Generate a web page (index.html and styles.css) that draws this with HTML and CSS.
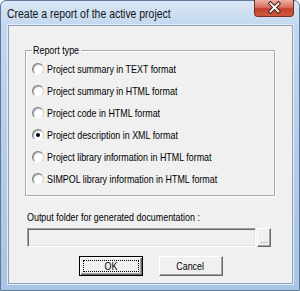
FILE: index.html
```html
<!DOCTYPE html>
<html lang="en">

<head>
  <meta charset="UTF-8">
  <title>Create a report of the active project</title>
  <link rel="stylesheet" href="styles.css">
</head>

<body>
  <div class="window">
    <!-- title bar -->
    <div class="titlebar">
      <span class="title">Create a report of the active project</span>
      <button class="close" aria-label="Close">
        <svg width="40" height="17" viewBox="0 0 40 17">
          <path d="M17 4.5 L25 12.5 M25 4.5 L17 12.5" stroke="#4a211a" stroke-width="4" stroke-linecap="square" />
          <path d="M17 4.5 L25 12.5 M25 4.5 L17 12.5" stroke="#ffffff" stroke-width="2" stroke-linecap="square" />
        </svg>
      </button>
    </div>

    <div class="client">
      <!-- report type group -->
      <fieldset class="group">
        <legend><span class="txt">Report type</span></legend>
        <label class="option"><span class="radio"></span><span class="txt">Project summary in TEXT format</span></label>
        <label class="option"><span class="radio"></span><span class="txt">Project summary in HTML format</span></label>
        <label class="option"><span class="radio"></span><span class="txt">Project code in HTML format</span></label>
        <label class="option"><span class="radio checked"></span><span class="txt">Project description in XML format</span></label>
        <label class="option"><span class="radio"></span><span class="txt">Project library information in HTML format</span></label>
        <label class="option"><span class="radio"></span><span class="txt">SIMPOL library information in HTML format</span></label>
      </fieldset>

      <!-- output folder -->
      <div class="output-label"><span class="txt">Output folder for generated documentation :</span></div>
      <div class="output-row">
        <div class="field"></div>
        <div class="browse">...</div>
      </div>

      <div class="buttons">
        <button class="btn default"><span><i class="txt">OK</i></span></button>
        <button class="btn"><span><i class="txt">Cancel</i></span></button>
      </div>
    </div>
  </div>
</body>

</html>
```

FILE: styles.css
```css
* {
  margin: 0;
  padding: 0;
  box-sizing: border-box;
}

body {
  width: 300px;
  height: 291px;
  overflow: hidden;
  font-family: "Liberation Sans", Arial, sans-serif;
  font-size: 11px;
  color: #000;
  background: #fff;
}

/* the dialog font is narrower than Arial */
.txt {
  display: inline-block;
  font-style: normal;
  white-space: nowrap;
  transform: scaleX(0.81);
  transform-origin: 0 50%;
}

/* window frame */
.window {
  width: 300px;
  height: 291px;
  display: flex;
  flex-direction: column;
  padding: 0 6px 6px 7px;
  border: 1px solid #5f7a99;
  border-radius: 6px 6px 0 0;
  background: linear-gradient(#d9e7f6, #c3d8ef 24px, #b2cbe8 60%, #a9c4e4);
}

.titlebar {
  height: 24px;
  display: flex;
  align-items: flex-start;
  justify-content: space-between;
}

.title {
  margin-top: 6px;
  margin-left: -1px;
  font-size: 12px;
  line-height: 14px;
  color: #141414;
  white-space: nowrap;
  transform: scaleX(0.87);
  transform-origin: 0 50%;
}

.close {
  width: 40px;
  height: 17px;
  margin-top: -1px;
  margin-right: -1px;
  border: 1px solid #7a2f24;
  border-top: none;
  border-radius: 0 0 4px 4px;
  background: linear-gradient(#eab1a6, #d8705f 45%, #c2402e 55%, #cf5a40);
  display: flex;
  overflow: hidden;
}

.close svg {
  margin-left: -1px;
  margin-top: -1px;
}

.client {
  flex: 1;
  display: flex;
  flex-direction: column;
  background-color: #f0f0f0;
  border: 1px solid #8ea3bc;
  box-shadow: 0 0 0 1px #e2ecf8;
}

/* group box */
.group {
  width: 250px;
  margin-top: 18px;
  margin-left: 16px;
  padding: 1px 0 5px 6px;
  border: 1px solid #a9a9a9;
  box-shadow: inset 1px 1px #fff, 1px 1px #fff;
}

.group legend {
  width: 49px;
  padding: 0 1px;
  line-height: 13px;
}

.option {
  display: flex;
  align-items: center;
  height: 22px;
}

.radio {
  flex: none;
  width: 12px;
  height: 12px;
  margin-right: 3px;
  border-radius: 50%;
  border: 1px solid;
  border-color: #7d7d7d #d0d0d0 #f4f4f4 #7d7d7d;
  background: radial-gradient(circle at 65% 65%, #ffffff 40%, #e6e6e6);
  box-shadow: inset 1px 1px #b5b5b5;
  display: flex;
  align-items: center;
  justify-content: center;
}

.radio.checked::after {
  content: '';
  width: 4px;
  height: 4px;
  border-radius: 50%;
  background: #000;
}

/* output folder */
.output-label {
  margin-top: 15px;
  margin-left: 18px;
  line-height: 13px;
}

.output-row {
  display: flex;
  margin-top: 4px;
  margin-left: 18px;
}

.field {
  width: 229px;
  height: 19px;
  border: 1px solid;
  border-color: #a0a0a0 #ffffff #ffffff #a0a0a0;
  box-shadow: inset 1px 1px #696969, inset -1px -1px #e3e3e3;
  background: #f0f0f0;
}

.browse {
  width: 14px;
  height: 19px;
  margin-left: 1px;
  border: 1px solid;
  border-color: #ffffff #696969 #696969 #ffffff;
  box-shadow: inset -1px -1px #a0a0a0;
  color: #808080;
  font-size: 9px;
  line-height: 22px;
  text-align: center;
  overflow: hidden;
}

/* OK / Cancel */
.buttons {
  display: flex;
  justify-content: center;
  gap: 16px;
  margin-top: 9px;
}

.btn {
  width: 64px;
  height: 20px;
  display: flex;
  padding: 3px;
  border: 1px solid;
  border-color: #ffffff #696969 #696969 #ffffff;
  box-shadow: inset -1px -1px #a0a0a0;
  background: #f0f0f0;
  font-family: inherit;
  font-size: 11px;
  color: #000;
}

.btn span {
  flex: 1;
  display: flex;
  align-items: center;
  justify-content: center;
  border: 1px solid transparent;
}

.btn .txt {
  transform-origin: 50% 50%;
}

.btn.default {
  border-color: #000;
  box-shadow: inset 1px 1px #fff, inset -1px -1px #696969, inset -2px -2px #a0a0a0;
}

.btn.default span {
  border: 1px dotted #000;
}
```
